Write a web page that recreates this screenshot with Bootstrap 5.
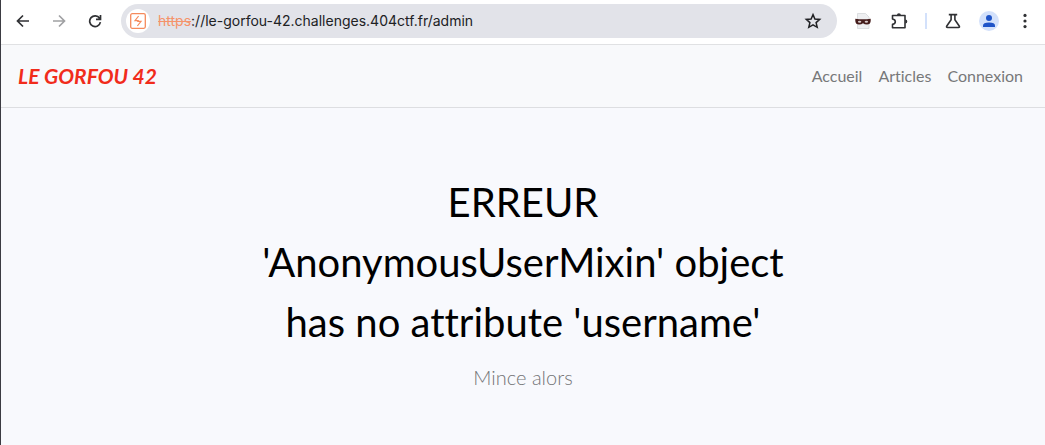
<!DOCTYPE html>
<html lang="fr">
<head>
<meta charset="utf-8">
<meta name="viewport" content="width=device-width, initial-scale=1">
<title>Le Gorfou 42</title>
<link href="https://cdn.jsdelivr.net/npm/bootstrap@5.3.0/dist/css/bootstrap.min.css" rel="stylesheet">
<style>
  body { font-family: Lato, sans-serif; font-variant-ligatures: none; background: #f8f9fd; border-left: 1px solid #3b3b42; }
  .browser-bar { height: 45px; padding: 0 2px 3px 4px; background: #fff; border-bottom: 1px solid #e0e1e3; color: #303134; }
  .tool { width: 36px; height: 34px; padding: 0; border: 0; background: none; color: inherit; display: flex; align-items: center; justify-content: center; flex: none; }
  .tool:disabled { color: #a0a1a3; }
  .address { height: 34px; background: #e2e3e9; border-radius: 17px; padding: 0 6px 0 5px; font: 14px/20px Inter, sans-serif; color: #202124; }
  .site-info { width: 24px; height: 24px; background: #fff; border-radius: 50%; }
  .scheme { color: #f5936a; text-decoration: line-through; margin-left: 8px; }
  .url { border: 0; padding: 0; background: none; outline: 0; color: inherit; min-width: 0; }
  .divider { width: 2px; height: 16px; background: #d3e1fb; margin: 0 8px; flex: none; }
  .site-nav { padding: 8px 14px 8px 17px; background: #f8f9fb; border-bottom: 1px solid #dddee1; min-height: 63px; }
  .site-nav .navbar-brand { color: #f12c1b; font-size: 21px; line-height: 30px; font-weight: 700; font-style: italic; }
  .site-nav .nav-link { color: #777879; font-size: 16px; line-height: 24px; padding: 8px; }
  .hero { padding: 64px 0 48px; }
  .hero-text { max-width: 560px; }
  .hero h1 { font-size: 40px; line-height: 60px; font-weight: 400; color: #000; margin-bottom: 10px; }
  .hero p { font-size: 20px; line-height: 30px; font-weight: 300; color: #737476; }
</style>
</head>
<body class="min-vh-100">
<header class="browser-bar d-flex align-items-center">
  <button class="tool" type="button" aria-label="Retour"><svg width="14" height="14" viewBox="0 0 14 14" fill="none" stroke="currentColor" stroke-width="1.7"><path d="M13 7H2M7 1.5 1.5 7 7 12.5"/></svg></button>
  <button class="tool" type="button" aria-label="Avancer" disabled><svg width="14" height="14" viewBox="0 0 14 14" fill="none" stroke="currentColor" stroke-width="1.7"><path d="M1 7h11M7 1.5 12.500 7 7 12.500"/></svg></button>
  <button class="tool me-2" type="button" aria-label="Actualiser"><svg width="14" height="14" viewBox="0 0 14 14" fill="none" stroke="currentColor" stroke-width="1.7"><path d="M12.400 8.200A5.400 5.400 0 1 1 11.600 4.200L12.300 5.200M12.500 1V5.400H8"/></svg></button>
  <div class="address d-flex align-items-center flex-grow-1">
    <span class="site-info d-flex align-items-center justify-content-center"><svg width="16" height="16" viewBox="0 0 16 16" fill="none" stroke="#f58a5c"><rect x=".7" y=".7" width="14.600" height="14.600" rx="1.500" stroke-width="1.300"/><path d="M8.600 3 5 7.600H8.200V8.400M7.400 13 11 8.400H7.800V7.600" stroke-width="1.200"/></svg></span>
    <label class="scheme" for="url">https</label>
    <input class="url flex-grow-1" id="url" type="text" value="://le-gorfou-42.challenges.404ctf.fr/admin" spellcheck="false">
    <button class="tool ms-2" type="button" aria-label="Ajouter aux favoris"><svg width="18" height="18" viewBox="0 0 18 18" fill="none" stroke="currentColor" stroke-width="1.500"><path d="M9 2.600 10.900 7l4.800.4-3.600 3.200 1.100 4.700L9 12.800l-4.200 2.500 1.100-4.700L2.300 7.400 7.100 7z"/></svg></button>
  </div>
  <button class="tool ms-2" type="button" aria-label="Extension"><svg width="16" height="18" viewBox="0 0 16 18"><path d="M2.500 1.500h8l3.500 3.500v11.500H2.500z" fill="#eeeff1" stroke="#d6d7d9" stroke-width=".8"/><path d="M.3 6.800Q8 7.800 15.700 6.800V9Q15.400 12.600 12 12.600 9.500 12.600 8 11.300 6.500 12.600 4 12.600.6 12.600.3 9z" fill="#451d1c"/><ellipse cx="4.600" cy="9.700" rx="1.700" ry="1" fill="#d8cccb"/><ellipse cx="11.400" cy="9.700" rx="1.700" ry="1" fill="#d8cccb"/></svg></button>
  <button class="tool" type="button" aria-label="Extensions"><svg width="18" height="18" viewBox="0 0 18 18" fill="none" stroke="currentColor" stroke-width="1.600" stroke-linejoin="round"><path d="M2.500 3.500H15V15.800H2.500V12.400Q5.300 12 5.300 9.700T2.500 7z"/><path d="M6.900 3.200a2 2 0 0 1 4 0zM15.300 7.600a2 2 0 0 1 0 4z" fill="currentColor" stroke="none"/></svg></button>
  <span class="divider"></span>
  <button class="tool" type="button" aria-label="Expériences"><svg width="16" height="16" viewBox="0 0 16 16" fill="none" stroke="currentColor" stroke-width="1.600" stroke-linejoin="round"><path d="M3.800 1.600h8.400M6.100 1.600v5.200L1.800 13q-.8 1.500.8 1.500h10.800q1.600 0 .8-1.500L9.900 6.800V1.600"/></svg></button>
  <button class="tool" type="button" aria-label="Profil"><svg width="20" height="20" viewBox="0 0 20 20"><circle cx="10" cy="10" r="10" fill="#d3e1fb"/><circle cx="10" cy="7" r="3" fill="#1f54c8"/><path d="M4 16v-1.600Q4 11.500 10 11.500t6 2.900V16z" fill="#1f54c8"/></svg></button>
  <button class="tool" type="button" aria-label="Menu"><svg width="4" height="16" viewBox="0 0 4 16" fill="currentColor"><circle cx="2" cy="2.400" r="1.600"/><circle cx="2" cy="8" r="1.600"/><circle cx="2" cy="13.600" r="1.600"/></svg></button>
</header>
<nav class="site-nav navbar navbar-expand d-flex justify-content-between">
  <a class="navbar-brand" href="#">LE GORFOU 42</a>
  <ul class="navbar-nav">
    <li class="nav-item"><a class="nav-link" href="#">Accueil</a></li>
    <li class="nav-item"><a class="nav-link" href="#">Articles</a></li>
    <li class="nav-item"><a class="nav-link" href="#">Connexion</a></li>
  </ul>
</nav>
<main class="hero container-fluid">
  <div class="hero-text mx-auto text-center">
    <h1>ERREUR<br>'AnonymousUserMixin' object has no attribute 'username'</h1>
    <p class="mb-0">Mince alors</p>
  </div>
</main>
<script src="https://cdn.jsdelivr.net/npm/bootstrap@5.3.0/dist/js/bootstrap.bundle.min.js"></script>
</body>
</html>
